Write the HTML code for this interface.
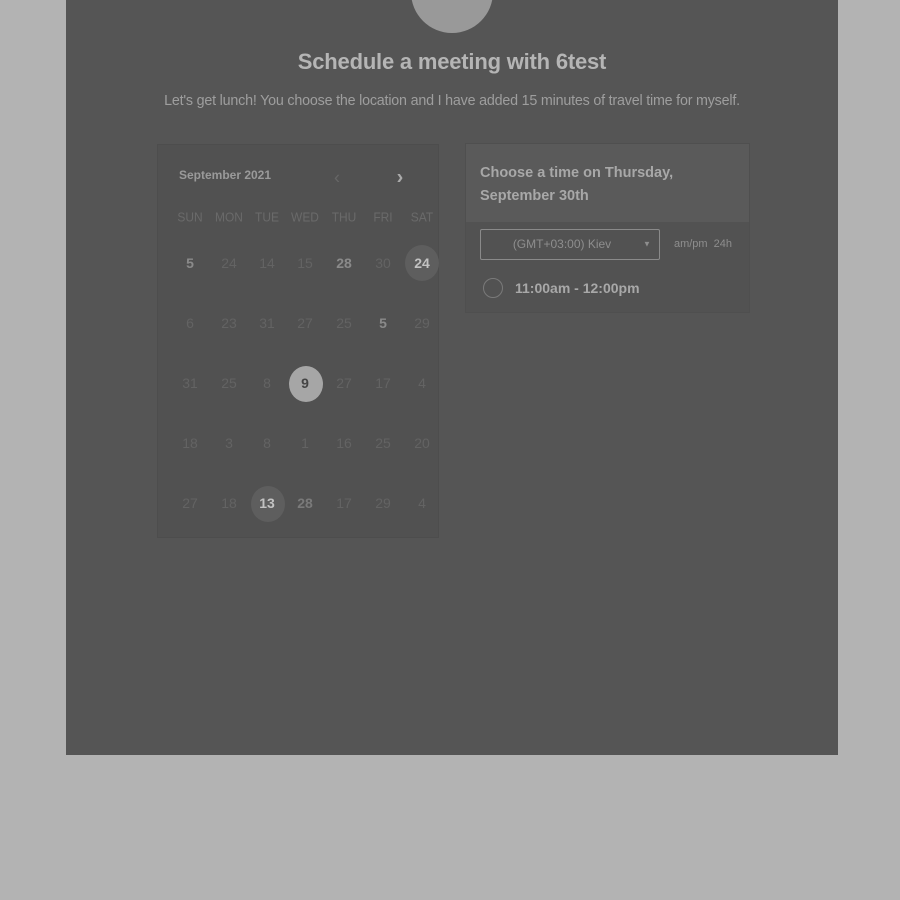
<!DOCTYPE html>
<html><head><style>
body{margin:0;background:#b3b3b3;width:900px;height:900px;position:relative;font-family:"Liberation Sans",sans-serif;overflow:hidden}
.main{position:absolute;left:66px;top:0;width:772px;height:755px;background:#555}
.av{position:absolute;left:411px;top:-49px;width:82px;height:82px;border-radius:50%;background:#999}
h1{position:absolute;left:0;width:904px;top:49px;margin:0;text-align:center;font-size:22px;font-weight:bold;color:#b5b5b5;letter-spacing:-0.2px}
.sub{position:absolute;left:0;width:904px;top:93px;text-align:center;font-size:14.3px;color:#9e9e9e;letter-spacing:-0.2px}
.cal{position:absolute;left:157px;top:144px;width:280px;height:392px;background:#515151;border:1px solid #4d4d4d}
.t{position:absolute;transform:translate(-50%,-50%);white-space:nowrap}
.c{position:absolute;width:34px;height:36px;border-radius:50%;transform:translate(-50%,-50%)}
.rt{position:absolute;left:465px;top:143px;width:283px;height:168px;background:#525252;border:1px solid #4f4f4f}
.rh{position:absolute;left:0;top:0;width:283px;height:78px;background:#5a5a5a}
</style></head><body>
<div class="main"></div>
<div class="av"></div>
<h1>Schedule a meeting with 6test</h1>
<div class="sub">Let's get lunch! You choose the location and I have added 15 minutes of travel time for myself.</div>
<div class="cal"></div>
<div class="t" style="left:225px;top:175px;font-size:12px;font-weight:bold;color:#9a9a9a">September 2021</div>
<div class="t" style="left:337px;top:178px;font-size:18px;color:#666">&#8249;</div>
<div class="t" style="left:400px;top:178px;font-size:20px;color:#aaa;font-weight:bold">&#8250;</div>
<div class="c" style="left:422px;top:263px;background:#5e5e5e"></div>
<div class="c" style="left:306px;top:384px;background:#a6a6a6"></div>
<div class="c" style="left:268px;top:504px;background:#5e5e5e"></div>
<div id="g"></div>
<div class="rt"><div class="rh"></div></div>
<div style="position:absolute;left:480px;top:162px;font-size:14.5px;font-weight:bold;color:#a8a8a8;line-height:23px">Choose a time on Thursday,<br>September 30th</div>
<div style="position:absolute;left:480px;top:229px;width:178px;height:29px;border:1px solid #8a8a8a;border-radius:2px"></div>
<div class="t" style="left:562px;top:244px;font-size:12px;color:#8e8e8e">(GMT+03:00) Kiev</div>
<div class="t" style="left:647px;top:244px;font-size:8px;color:#8e8e8e">&#9660;</div>
<div class="t" style="left:703px;top:244px;font-size:11px;color:#8e8e8e">am/pm&nbsp;&nbsp;24h</div>
<div style="position:absolute;left:483px;top:278px;width:18px;height:18px;border:1.5px solid #7a7a7a;border-radius:50%"></div>
<div style="position:absolute;left:515px;top:280px;font-size:14px;font-weight:bold;color:#a8a8a8">11:00am - 12:00pm</div>
<script>
var xs=[190,229,267,305,344,383,422],ys=[263,323,383,443,503];
var names=["SUN","MON","TUE","WED","THU","FRI","SAT"];
var rows=[["5","24","14","15","28","30","24"],["6","23","31","27","25","5","29"],["31","25","8","9","27","17","4"],["18","3","8","1","16","25","20"],["27","18","13","28","17","29","4"]];
var bold={"0,0":"#8a8a8a","0,4":"#8a8a8a","0,6":"#c2c2c2","1,5":"#8a8a8a","2,3":"#444","4,2":"#c2c2c2","4,3":"#7a7a7a"};
var h="";
names.forEach(function(n,i){h+='<div class="t" style="left:'+xs[i]+'px;top:217px;font-size:13px;color:#6a6a6a;transform:translate(-50%,-50%) scaleX(0.92)">'+n+'</div>';});
rows.forEach(function(r,j){r.forEach(function(v,i){var k=j+","+i;var c=bold[k];h+='<div class="t" style="left:'+xs[i]+'px;top:'+ys[j]+'px;font-size:14px;'+(c?'font-weight:bold;color:'+c:'color:#636363')+'">'+v+'</div>';});});
document.getElementById("g").innerHTML=h;
</script>
</body></html>
